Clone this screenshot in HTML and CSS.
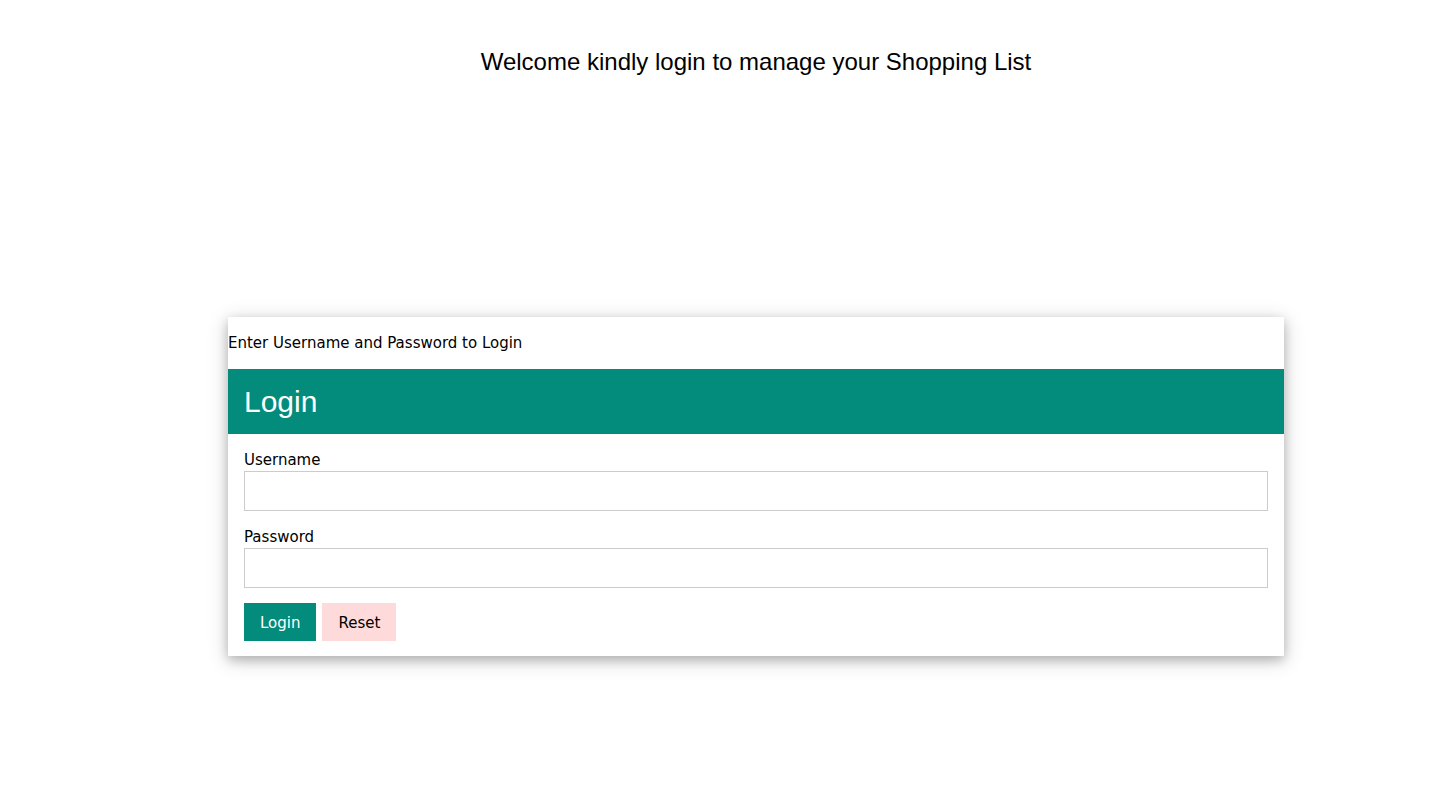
FILE: index.html
```html
<!DOCTYPE html>
<html>
<head>
<meta charset="utf-8">
<link rel="stylesheet" href="styles.css">
</head>
<body>
<div class="page">
  <h1 class="welcome">Welcome kindly login to manage your Shopping List</h1>
  <div class="card">
    <p class="intro">Enter Username and Password to Login</p>
    <div class="card-head">
      <h2>Login</h2>
    </div>
    <form class="form">
      <label class="label">Username</label>
      <input class="input" type="text">
      <label class="label">Password</label>
      <input class="input" type="password">
      <div class="buttons">
        <button type="button" class="btn btn-teal">Login</button>
        <button type="button" class="btn btn-pink">Reset</button>
      </div>
    </form>
  </div>
</div>
</body>
</html>
```

FILE: styles.css
```css
html, body {
  margin: 0;
  padding: 0;
  background: #fff;
}
body {
  font-family: "DejaVu Sans", Verdana, sans-serif;
  font-size: 15px;
  line-height: 22px;
  color: #000;
  min-height: 100vh;
}
.page {
  width: 1056px;
  margin-left: 228px;
  padding-top: 44px;
  padding-bottom: 60px;
}
.welcome {
  margin: 0;
  font-family: "Liberation Sans", Arial, sans-serif;
  font-weight: normal;
  font-size: 24px;
  line-height: 36px;
  text-align: center;
}
.card {
  margin-top: 237px;
  background: #fff;
  box-shadow: 0 4px 10px 0 rgba(0,0,0,0.2), 0 4px 20px 0 rgba(0,0,0,0.19);
  display: flow-root;
}
.intro {
  margin: 15px 0;
  padding-top: 1px;
  line-height: 21px;
}
.card-head {
  background: #038b7b;
  color: #fff;
  padding: 0 16px;
  display: flow-root;
}
.card-head h2 {
  margin: 10px 0;
  font-family: "Liberation Sans", Arial, sans-serif;
  font-weight: normal;
  font-size: 30px;
  line-height: 45px;
}
.form {
  padding: 15px 16px;
  display: flex;
  flex-direction: column;
}
.label {
  display: block;
  padding-top: 1px;
  line-height: 21px;
}
.input {
  display: block;
  box-sizing: border-box;
  width: 100%;
  height: 40px;
  padding: 8px;
  border: 1px solid #ccc;
  font: inherit;
  margin: 0 0 15px 0;
  outline: none;
}
.buttons {
  display: flex;
  gap: 6px;
}
.btn {
  border: none;
  padding: 9px 16px 7px;
  font: inherit;
  line-height: 22px;
  height: 38px;
  cursor: pointer;
}
.btn-teal {
  background: #038b7b;
  color: #fff;
}
.btn-pink {
  background: #ffdada;
  color: #000;
}
```
